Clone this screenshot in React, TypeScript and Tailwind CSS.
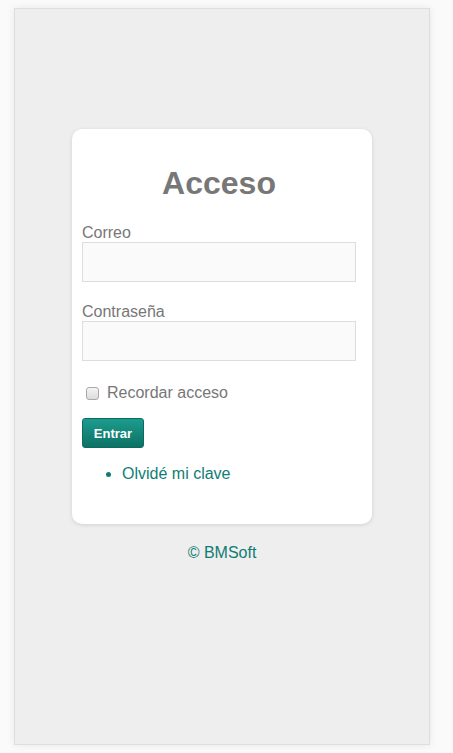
import { useState } from 'react';

export default function App() {
  const [remember, setRemember] = useState(false);

  return (
    <div className="min-h-screen bg-[#fafafa] pt-[8px] pl-[14px] font-['Liberation_Sans',Arial,sans-serif]">
      <div className="w-[416px] h-[737px] border border-[#dedede] bg-[#eeeeee] shadow-[0_0_8px_rgba(0,0,0,0.08)] flex flex-col items-center pt-[120px]">
        <div className="w-[300px] bg-white rounded-[10px] shadow-[0_1px_4px_rgba(0,0,0,0.12)] pt-[36px] pl-[10px] pr-[16px] pb-[41px]">
          <h1 className="text-[32px] leading-[37px] font-bold text-[#777777] text-center">Acceso</h1>

          <label className="block mt-[22px] text-[16px] leading-[18px] text-[#777777]">Correo</label>
          <input
            type="email"
            className="block w-full h-[40px] border border-[#dddddd] bg-[#fafafa] px-2 outline-none"
          />

          <label className="block mt-[21px] text-[16px] leading-[18px] text-[#777777]">Contraseña</label>
          <input
            type="password"
            className="block w-full h-[40px] border border-[#dddddd] bg-[#fafafa] px-2 outline-none"
          />

          <label className="mt-[23px] flex items-center h-[18px] text-[16px] leading-[18px] text-[#777777]">
            <input
              type="checkbox"
              checked={remember}
              onChange={(e) => setRemember(e.target.checked)}
              className="appearance-none ml-[4px] mr-[8px] w-[13px] h-[13px] rounded-[3px] border border-[#a9a9a9] bg-gradient-to-b from-[#f4f4f4] to-[#dcdcdc] checked:from-[#1a9a8b] checked:to-[#0d7468]"
            />
            Recordar acceso
          </label>

          <button className="mt-[16px] w-[62px] h-[30px] rounded-[3px] border border-[#0b6b61] bg-gradient-to-b from-[#1c9c8d] to-[#0c7266] text-white text-[13px] font-bold leading-none">
            Entrar
          </button>

          <ul className="mt-[17px] pl-[40px] list-disc text-[16px] leading-[18px] text-[#0f7d74] marker:text-[#0f7d74]">
            <li>
              <a href="#" className="text-[#0f7d74]">Olvidé mi clave</a>
            </li>
          </ul>
        </div>

        <div className="mt-[20px] text-[16px] leading-[18px] text-[#0f7d74]">© BMSoft</div>
      </div>
    </div>
  );
}
